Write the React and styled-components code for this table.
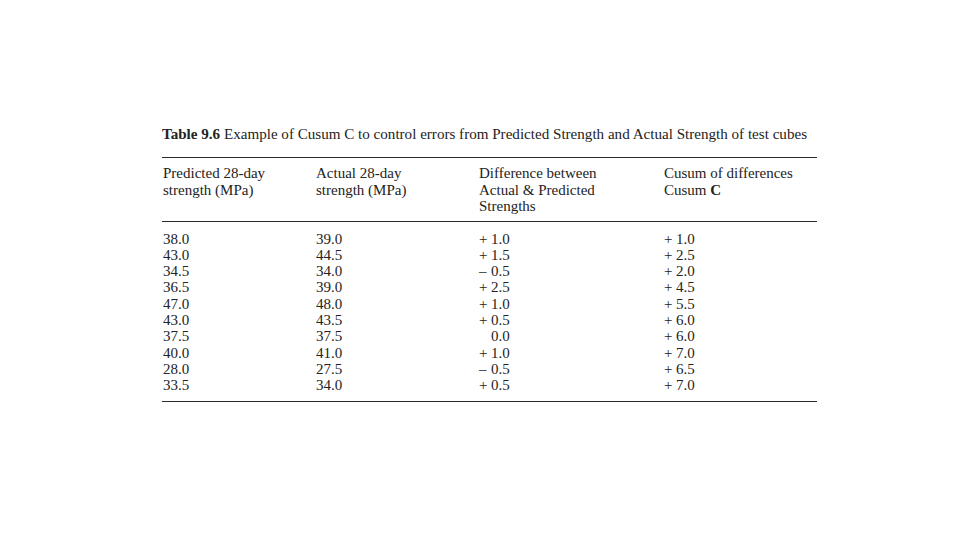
import React from 'react'
import styled, { createGlobalStyle } from 'styled-components'

const GlobalStyle = createGlobalStyle`
  html, body {
    margin: 0;
    padding: 0;
    background: #ffffff;
  }
  body {
    width: 960px;
    height: 540px;
    overflow: hidden;
    font-family: "Liberation Serif", "Times New Roman", serif;
    color: #232323;
  }
`

const Page = styled.div`
  padding: 125px 0 0 162px;
`

const Caption = styled.div`
  font-size: 15.1px;
  line-height: 19px;
  white-space: nowrap;
  margin-bottom: 13px;
  b {
    font-weight: bold;
  }
`

const Table = styled.div`
  width: 655px;
  border-top: 1.5px solid #2a2a2a;
  border-bottom: 1.5px solid #2a2a2a;
  font-size: 15px;
`

const Section = styled.div`
  display: grid;
  grid-template-columns: 153px 163px 185px 154px;
  padding: ${(p) => p.$pad};
  line-height: ${(p) => p.$lh}px;
  border-bottom: ${(p) => (p.$rule ? '1.5px solid #2a2a2a' : 'none')};
`

const Cell = styled.div`
  padding-left: 1px;
  white-space: nowrap;
`

const Sign = styled.span`
  display: inline-block;
  width: 12px;
`

const rows = [
  ['38.0', '39.0', '+', '1.0', '+', '1.0'],
  ['43.0', '44.5', '+', '1.5', '+', '2.5'],
  ['34.5', '34.0', '\u2013', '0.5', '+', '2.0'],
  ['36.5', '39.0', '+', '2.5', '+', '4.5'],
  ['47.0', '48.0', '+', '1.0', '+', '5.5'],
  ['43.0', '43.5', '+', '0.5', '+', '6.0'],
  ['37.5', '37.5', '', '0.0', '+', '6.0'],
  ['40.0', '41.0', '+', '1.0', '+', '7.0'],
  ['28.0', '27.5', '\u2013', '0.5', '+', '6.5'],
  ['33.5', '34.0', '+', '0.5', '+', '7.0'],
]

const App = () => (
  <Page>
    <GlobalStyle />
    <Caption>
      <b>Table 9.6</b> Example of Cusum C to control errors from Predicted
      Strength and Actual Strength of test cubes
    </Caption>
    <Table>
      <Section $pad="7px 0 6px" $lh={16.5} $rule>
        <Cell>
          Predicted 28-day
          <br />
          strength (MPa)
        </Cell>
        <Cell>
          Actual 28-day
          <br />
          strength (MPa)
        </Cell>
        <Cell>
          Difference between
          <br />
          Actual &amp; Predicted
          <br />
          Strengths
        </Cell>
        <Cell>
          Cusum of differences
          <br />
          Cusum <b>C</b>
        </Cell>
      </Section>
      <Section $pad="9px 0 8px" $lh={16.3}>
        {rows.map((r, i) => (
          <React.Fragment key={i}>
            <Cell>{r[0]}</Cell>
            <Cell>{r[1]}</Cell>
            <Cell>
              <Sign>{r[2]}</Sign>
              {r[3]}
            </Cell>
            <Cell>
              <Sign>{r[4]}</Sign>
              {r[5]}
            </Cell>
          </React.Fragment>
        ))}
      </Section>
    </Table>
  </Page>
)

export default App
